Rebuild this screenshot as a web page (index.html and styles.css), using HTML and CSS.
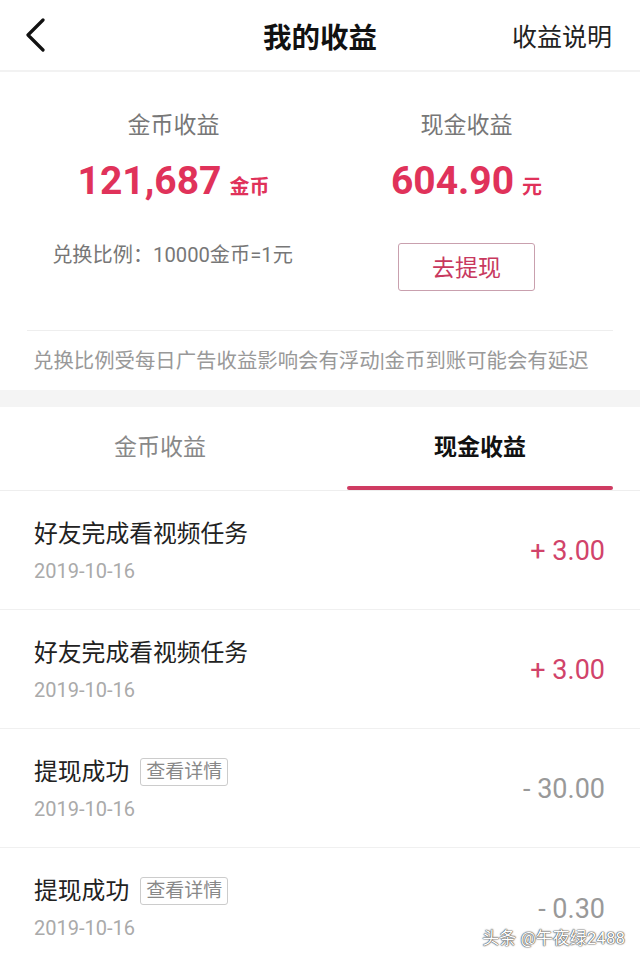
FILE: index.html
```html
<!DOCTYPE html>
<html>
	<head>
		<meta charset="UTF-8">
		<title>我的收益</title>
		<link rel="stylesheet" href="styles.css">
	</head>
	<body>
		<div class="page">
			<div class="topbar">
				<a href="javascript:;" class="back">
					<svg width="22" height="34" viewBox="0 0 22 34"><path d="M19 2 L4 17 L19 32" fill="none" stroke="#111" stroke-width="3.2" stroke-linecap="round" stroke-linejoin="round"/></svg>
				</a>
				<h1>我的收益</h1>
				<a href="javascript:;" class="help">收益说明</a>
			</div>

			<div class="summary">
				<div class="cols">
					<div class="col">
						<p class="label">金币收益</p>
						<p class="value">121,687<em>金币</em></p>
						<p class="rate">兑换比例：10000金币=1元</p>
					</div>
					<div class="col">
						<p class="label">现金收益</p>
						<p class="value">604.90<em>元</em></p>
						<a href="javascript:;" class="btn">去提现</a>
					</div>
				</div>
				<p class="notice">兑换比例受每日广告收益影响会有浮动|金币到账可能会有延迟</p>
			</div>

			<ul class="tabs">
				<li>金币收益</li>
				<li class="active">现金收益</li>
			</ul>

			<ul class="list">
				<li>
					<div class="info">
						<p class="name">好友完成看视频任务</p>
						<p class="date">2019-10-16</p>
					</div>
					<span class="amount plus">+ 3.00</span>
				</li>
				<li>
					<div class="info">
						<p class="name">好友完成看视频任务</p>
						<p class="date">2019-10-16</p>
					</div>
					<span class="amount plus">+ 3.00</span>
				</li>
				<li>
					<div class="info">
						<p class="name">提现成功<span class="tag">查看详情</span></p>
						<p class="date">2019-10-16</p>
					</div>
					<span class="amount">- 30.00</span>
				</li>
				<li>
					<div class="info">
						<p class="name">提现成功<span class="tag">查看详情</span></p>
						<p class="date">2019-10-16</p>
					</div>
					<span class="amount">- 0.30</span>
				</li>
			</ul>

			<div class="mark">头条 @午夜绿2488</div>
		</div>
	</body>
</html>
```

FILE: styles.css
```css
*{
	margin:0px;
	padding:0px;
	list-style: none;
	box-sizing: border-box;
}
body{
	font-family: Roboto, "Noto Sans CJK SC", sans-serif;
	background: #fff;
	color: #222;
}
a{
	text-decoration: none;
	color: inherit;
}
.page{
	width: 640px;
	height: 962px;
	position: relative;
	overflow: hidden;
}

/* 顶部 */
.topbar{
	height: 72px;
	display: flex;
	align-items: center;
	justify-content: space-between;
	padding: 0 28px 0 24px;
	border-bottom: 2px solid #f2f2f2;
	position: relative;
}
.topbar .back{
	display: flex;
	width: 22px;
	height: 34px;
}
.topbar h1{
	position: absolute;
	left: 0;
	right: 0;
	text-align: center;
	font-size: 28.5px;
	font-weight: bold;
	color: #111;
	pointer-events: none;
}
.topbar .help{
	font-size: 25px;
	color: #222;
}

/* 收益汇总 */
.summary{
	padding: 0 27px;
}
.cols{
	display: flex;
	padding-top: 36px;
}
.col{
	flex: 1;
	display: flex;
	flex-direction: column;
	align-items: center;
}
.col .label{
	font-size: 23px;
	line-height: 36px;
	color: #777;
}
.col .value{
	font-size: 39px;
	font-weight: bold;
	color: #e0325a;
	line-height: 54px;
	margin-top: 10px;
}
.col .value em{
	font-style: normal;
	font-size: 20px;
	margin-left: 8px;
}
.col .rate{
	margin-top: 26px;
	font-size: 20.2px;
	color: #777;
	line-height: 30px;
	margin-right: 2px;
}
.col .btn{
	margin-top: 29px;
	width: 137px;
	height: 48px;
	border: 1px solid #c9a0ae;
	border-radius: 3px;
	display: flex;
	align-items: center;
	justify-content: center;
	font-size: 23px;
	color: #c8385e;
	padding-bottom: 3px;
}
.notice{
	margin-top: 39px;
	border-top: 1px solid #eee;
	padding: 14px 0 0 6px;
	height: 60px;
	font-size: 20.4px;
	color: #999;
	line-height: 32px;
	white-space: nowrap;
}

/* 切换 */
.tabs{
	border-top: 17px solid #f4f4f4;
	display: flex;
	height: 101px;
	border-bottom: 1px solid #eee;
}
.tabs li{
	flex: 1;
	display: flex;
	align-items: center;
	justify-content: center;
	font-size: 23px;
	color: #888;
	position: relative;
	padding-bottom: 8px;
}
.tabs li.active{
	color: #111;
	font-weight: bold;
}
.tabs li.active:after{
	content: "";
	position: absolute;
	left: 27px;
	right: 27px;
	bottom: 0px;
	height: 4px;
	border-radius: 2px;
	background: #cf3b62;
}

/* 明细 */
.list li{
	height: 119px;
	display: flex;
	align-items: center;
	justify-content: space-between;
	padding: 0 35px 0 34px;
	border-bottom: 1px solid #f0f0f0;
}
.list li:last-child{
	border-bottom: none;
}
.info{
	display: flex;
	flex-direction: column;
	padding-top: 2px;
}
.info .name{
	font-size: 23.8px;
	line-height: 30px;
	color: #222;
	display: flex;
	align-items: center;
}
.info .tag{
	margin-left: 11px;
	border: 1px solid #ccc;
	border-radius: 3px;
	font-size: 19px;
	line-height: 26px;
	padding: 0 5px;
	color: #888;
}
.info .date{
	margin-top: 9px;
	font-size: 20px;
	line-height: 26px;
	color: #aaa;
}
.amount{
	font-size: 27px;
	color: #999;
	padding-top: 2px;
}
.amount.plus{
	color: #d1436a;
}

.mark{
	position: absolute;
	right: 15px;
	bottom: 13px;
	font-size: 17px;
	color: #fff;
	text-shadow: 0 0 1px #444, 0 0 1px #444, 0 0 2px #666;
}
```
